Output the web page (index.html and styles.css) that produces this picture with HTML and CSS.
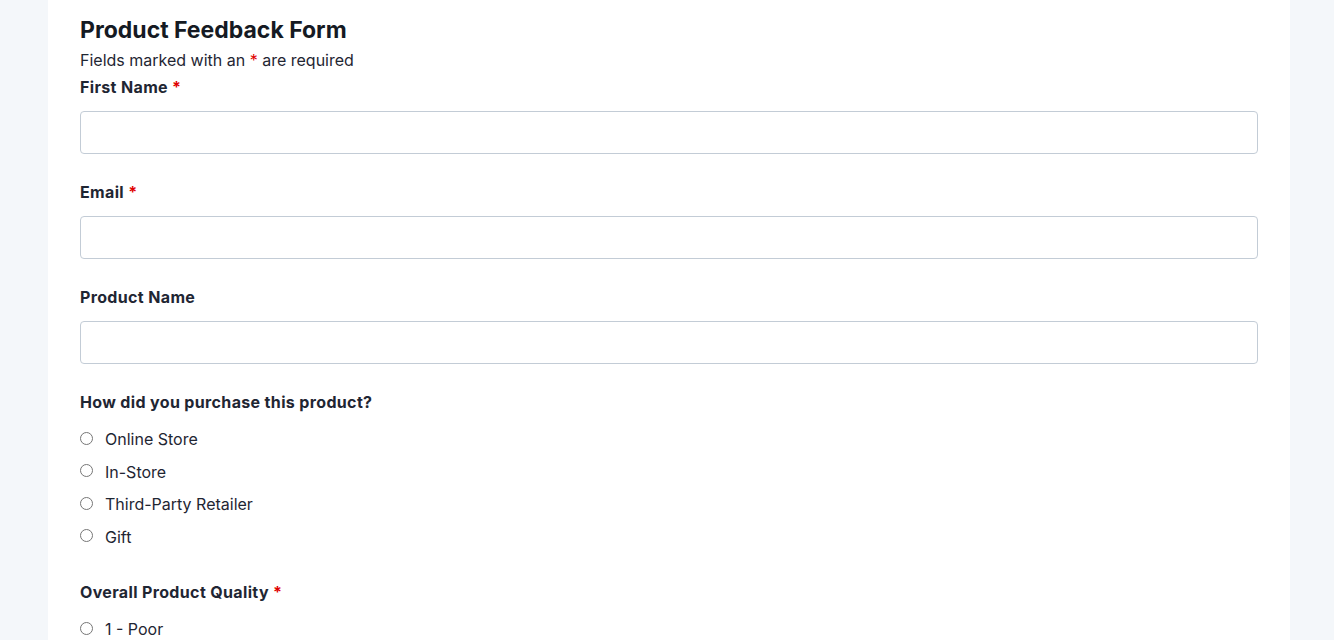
FILE: index.html
```html
<!DOCTYPE html>
<html lang="en">
<head>
<meta charset="utf-8">
<title>Product Feedback Form</title>
<link rel="stylesheet" href="styles.css">
</head>
<body>
<main class="card">
  <h1 class="title">Product Feedback Form</h1>
  <p class="note">Fields marked with an <span class="req">*</span> are required</p>
  <form class="form">
    <div class="field">
      <label class="label" for="fname">First Name <span class="req">*</span></label>
      <input class="input" id="fname" type="text">
    </div>
    <div class="field">
      <label class="label" for="email">Email <span class="req">*</span></label>
      <input class="input" id="email" type="email">
    </div>
    <div class="field">
      <label class="label" for="pname">Product Name</label>
      <input class="input" id="pname" type="text">
    </div>
    <fieldset class="group">
      <legend class="label">How did you purchase this product?</legend>
      <label class="option"><input type="radio" name="purchase"><span>Online Store</span></label>
      <label class="option"><input type="radio" name="purchase"><span>In-Store</span></label>
      <label class="option"><input type="radio" name="purchase"><span>Third-Party Retailer</span></label>
      <label class="option"><input type="radio" name="purchase"><span>Gift</span></label>
    </fieldset>
    <fieldset class="group">
      <legend class="label">Overall Product Quality <span class="req">*</span></legend>
      <label class="option"><input type="radio" name="quality"><span>1 - Poor</span></label>
      <label class="option"><input type="radio" name="quality"><span>2 - Fair</span></label>
      <label class="option"><input type="radio" name="quality"><span>3 - Good</span></label>
    </fieldset>
  </form>
</main>
</body>
</html>
```

FILE: styles.css
```css
html, body {
  margin: 0;
  padding: 0;
  background: #f4f7fa;
  font-family: Inter, "Noto Sans", "Liberation Sans", sans-serif;
  color: #1f2633;
}
.card {
  width: 1178px;
  margin: 0 auto 0 48px;
  background: #ffffff;
  padding: 16px 32px 40px;
  min-height: 700px;
}
.title {
  margin: 0;
  font-size: 23px;
  line-height: 28px;
  font-weight: 700;
  color: #151a23;
}
.note {
  margin: 4px 0 0;
  font-size: 16px;
  line-height: 24px;
  color: #1f2633;
}
.req {
  color: #e00000;
}
.form {
  margin-top: 3px;
}
.field {
  display: flex;
  flex-direction: column;
  margin-bottom: 26px;
}
.label {
  display: block;
  font-size: 16px;
  line-height: 24px;
  font-weight: 700;
  letter-spacing: 0.35px;
  color: #1f2633;
  padding: 0;
}
.field .label {
  margin-bottom: 12px;
}
.input {
  box-sizing: border-box;
  width: 100%;
  height: 43px;
  border: 1px solid #c3ccd6;
  border-radius: 4px;
  padding: 8px 12px;
  font: inherit;
  background: #fff;
}
.group {
  border: 0;
  margin: 0 0 23px;
  padding: 0;
  min-width: 0;
}
.group .label {
  margin-bottom: 13px;
}
.group legend.label {
  float: left;
  width: 100%;
}
.group legend + .option {
  clear: both;
}
.option {
  display: flex;
  align-items: center;
  gap: 12px;
  font-size: 16px;
  line-height: 24px;
  margin-bottom: 8.5px;
  color: #1f2633;
}
.option input {
  margin: -2px 0 0 0;
  width: 13px;
  height: 13px;
}
```
